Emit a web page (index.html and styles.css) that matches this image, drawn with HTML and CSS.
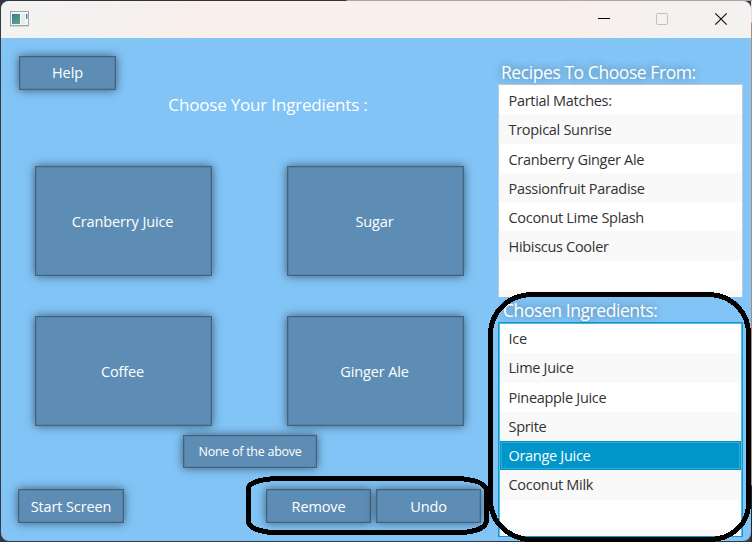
FILE: index.html
```
<!DOCTYPE html>
<html lang="en">
<head>
<meta charset="utf-8">
<title>Ingredients</title>
<link rel="stylesheet" href="styles.css">
</head>
<body>
<div class="window">
  <header class="titlebar">
    <svg class="app-icon" width="19" height="16" viewBox="0 0 19 16">
      <defs><linearGradient id="g" x1="0" y1="0" x2="0.6" y2="1"><stop offset="0" stop-color="#3f73a0"/><stop offset="1" stop-color="#52a878"/></linearGradient></defs>
      <rect x="0.5" y="0.5" width="18" height="14" fill="#f5f6f8" stroke="#a2a5a9"/>
      <path d="M0 15.5H19" stroke="#d5d5d5"/>
      <rect x="2" y="3" width="8" height="10" fill="url(#g)"/>
      <rect x="11" y="3" width="4" height="10" fill="#e9ebee"/>
      <rect x="16" y="3" width="1.5" height="5" fill="url(#g)"/>
    </svg>
    <svg class="controls" width="132" height="14" viewBox="0 0 132 14">
      <path d="M0 6.5H12" stroke="#000" stroke-width="1"/>
      <rect x="58.5" y="1.5" width="11" height="11" rx="1" fill="none" stroke="#c4bfbf"/>
      <path d="M117.3 1.3L128.7 12.7M128.7 1.3L117.3 12.7" stroke="#111" stroke-width="1.2"/>
    </svg>
  </header>
  <main class="content">
    <section class="left">
      <button class="btn help">Help</button>
      <h1 class="prompt">Choose Your Ingredients :</h1>
      <div class="choices">
        <button class="btn">Cranberry Juice</button>
        <button class="btn">Sugar</button>
        <button class="btn">Coffee</button>
        <button class="btn">Ginger Ale</button>
      </div>
      <button class="btn none">None of the above</button>
      <div class="actions">
        <button class="btn start">Start Screen</button>
        <button class="btn">Remove</button>
        <button class="btn">Undo</button>
      </div>
    </section>
    <aside class="right">
      <h2 class="label">Recipes To Choose From:</h2>
      <ul class="list recipes">
        <li>Partial Matches:</li>
        <li>Tropical Sunrise</li>
        <li>Cranberry Ginger Ale</li>
        <li>Passionfruit Paradise</li>
        <li>Coconut Lime Splash</li>
        <li>Hibiscus Cooler</li>
        <li></li>
        <li></li>
      </ul>
      <h2 class="label chosen-label">Chosen Ingredients:</h2>
      <ul class="list chosen">
        <li>Ice</li>
        <li>Lime Juice</li>
        <li>Pineapple Juice</li>
        <li>Sprite</li>
        <li class="selected">Orange Juice</li>
        <li>Coconut Milk</li>
        <li></li>
        <li></li>
      </ul>
    </aside>
  </main>
</div>
<svg class="marks" width="752" height="542" viewBox="0 0 752 542" fill="none" stroke="#000" stroke-width="5" shape-rendering="crispEdges">
  <path d="M530 294.5H711C733 296 748.5 313 748.5 334V503C748.5 524 732 539.5 709 539.5H532C509 539.5 490.5 522 490.5 500V334C490.5 313 507 296 530 294.5Z"/>
  <path d="M275 478.500H459C477 480 486.500 484 486.500 491V520C486.500 528 477 531 463 532.500H270C256 530 248.500 528 248.500 521V489C248.500 483 257 480 275 478.500Z"/>
</svg>
</body>
</html>
```

FILE: styles.css
```
* { box-sizing: border-box; }
body {
  margin: 0;
  width: 752px;
  height: 542px;
  overflow: hidden;
  background: linear-gradient(90deg, #343438 0 346px, #aaa5a3 347px) 0 0 / 752px 1px no-repeat,
    linear-gradient(#e6ddd8 0 22px, #ae8d78 23px 485px, #26262b 486px) 751px 0 / 1px 542px no-repeat,
    #37383d;
  font-family: "Open Sans", "Noto Sans", sans-serif;
}
.window {
  margin: 1px 1px 1px;
  height: 540px;
  border-radius: 8px;
  overflow: hidden;
  background: #82c4f6;
}
.titlebar {
  height: 37px;
  padding: 0 21px 0 9px;
  display: flex;
  justify-content: space-between;
  align-items: center;
  background: linear-gradient(90deg, #f2f3f1 0, #f4f1ef 15%, #f9efec 27%, #f9efec 75%, #f3f2f1 92%);
}
.app-icon { position: relative; top: -1px; }
.app-icon, .controls { flex: none; }
.controls { position: relative; top: -1px; }
.content { display: flex; }
.left {
  width: 497px;
  height: 503px;
  padding: 18px 0 0 17px;
  display: flex;
  flex-direction: column;
}
.btn {
  border: 1px solid #42627d;
  padding: 0;
  background: #5d8db4;
  color: #fff;
  font: 14.5px "Open Sans", sans-serif;
  letter-spacing: -0.12px;
  box-shadow: inset 0 0 0 1px #5682a6, 0 0 9px rgba(0, 0, 0, .55);
}
.help { width: 97px; height: 34px; margin-left: 1px; padding-bottom: 2px; flex: none; }
.prompt {
  margin: 3px 0 0;
  width: 500px;
  height: 24px;
  font-size: 17px;
  font-weight: 400;
  line-height: 24px;
  color: #fff;
  text-align: center;
  letter-spacing: -.18px;
}
.choices {
  margin: 49px 0 0 17px;
  display: grid;
  grid-template-columns: 177px 177px;
  grid-auto-rows: 110px;
  gap: 40px 75px;
}
.choices .btn { padding-right: 2px; }
.none { width: 134px; height: 33px; margin: 9px 0 0 165px; font-size: 12.5px; letter-spacing: -.27px; flex: none; }
.actions { display: flex; margin-top: 21px; gap: 5px; }
.actions .btn { width: 105px; height: 34px; }
.actions .start { width: 106px; margin-right: 137px; }
.right { width: 245px; padding-top: 22px; }
.label {
  margin: 0;
  height: 24px;
  padding-left: 3px;
  font-size: 17.5px;
  line-height: 25px;
  font-weight: 400;
  color: #fff;
  white-space: nowrap;
  letter-spacing: -.43px;
  text-shadow: 0 0 8px rgba(0, 0, 0, .45);
}
.chosen-label { height: 25px; padding-left: 5px; line-height: 27px; }
.list {
  margin: 0;
  padding: 0;
  list-style: none;
  height: 213px;
  overflow: hidden;
  background: #fff;
  border: 1px solid #c0cbd3;
}
.list li {
  height: 29.25px;
  padding-left: 9.5px;
  line-height: 31px;
  font-size: 14.5px;
  letter-spacing: -.3px;
  color: #323232;
  background: #fff;
}
.list li:nth-child(even) { background: #f9f9f9; }
.recipes { border-bottom: 0; }
.chosen { height: 215px; border: 1px solid #099dd0; box-shadow: inset 0 0 0 1px #55bade; padding-top: 1px; }
.chosen li { margin: 0 1px; padding-left: 8.5px; line-height: 29px; }
.list li.selected {
  background: #0096c9;
  color: #fff;
  box-shadow: inset 0 0 0 1px #0096c9, inset 0 0 0 2px #30a9d4;
}
.marks { position: absolute; left: 0; top: 0; }
```
